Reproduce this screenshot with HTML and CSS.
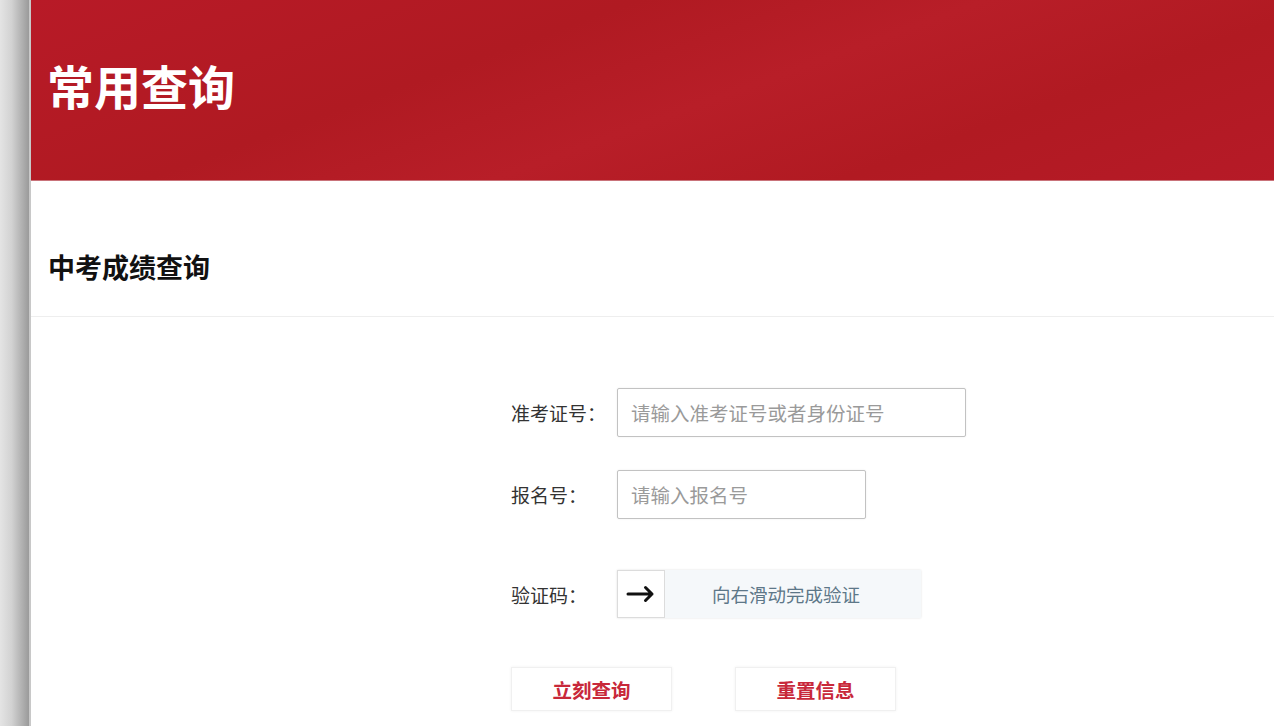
FILE: index.html
```html
<!DOCTYPE html>
<html lang="zh-CN">
<head>
    <meta charset="UTF-8">
    <meta name="viewport" content="width=device-width, initial-scale=1.0">
    <title>常用查询</title>
    <link rel="stylesheet" href="styles.css">
</head>
<body>
    <div class="page">
        <div class="edge"></div>
        <main class="main">
            <header class="banner">
                <h1>常用查询</h1>
            </header>
            <section class="panel">
                <h2>中考成绩查询</h2>
            </section>
            <form class="query-form" id="query-form">
                <div class="row">
                    <label for="zkzh">准考证号：</label>
                    <input type="text" id="zkzh" class="wide" placeholder="请输入准考证号或者身份证号">
                </div>
                <div class="row">
                    <label for="bmh">报名号：</label>
                    <input type="text" id="bmh" placeholder="请输入报名号">
                </div>
                <div class="row row-captcha">
                    <label>验证码：</label>
                    <div class="slider">
                        <div class="slider-handle">
                            <svg width="30" height="20" viewBox="0 0 30 20">
                                <path d="M2 10 H26 M19.5 3.5 L26 10 L19.5 16.5" fill="none" stroke="#111" stroke-width="3" stroke-linecap="round" stroke-linejoin="round"/>
                            </svg>
                        </div>
                        <div class="slider-text">向右滑动完成验证</div>
                    </div>
                </div>
                <div class="actions">
                    <button type="submit">立刻查询</button>
                    <button type="reset">重置信息</button>
                </div>
            </form>
        </main>
    </div>
</body>
</html>
```

FILE: styles.css
```css
body {
    margin: 0;
    font-family: "Noto Sans CJK SC", "Noto Sans", sans-serif;
    background: #fff;
    overflow: hidden;
}

.page {
    display: flex;
    height: 726px;
}

.edge {
    width: 29px;
    flex-shrink: 0;
    background: linear-gradient(to right, #e4e4e4 0%, #d2d2d2 40%, #9a9a9a 100%);
    border-right: 2px solid #c8c8c8;
}

.main {
    flex: 1;
    background: #fff;
}

.banner {
    height: 181px;
    display: flex;
    align-items: center;
    padding: 0 16px 12px;
    box-sizing: border-box;
    background: linear-gradient(160deg, #b81a27 0%, #b01a22 35%, #b81e28 55%, #b11a22 75%, #b61a27 100%);
    border-bottom: 1px solid #c9737a;
}

.banner h1 {
    margin: 0;
    color: #fff;
    font-size: 47px;
    font-weight: 700;
}

.panel {
    padding: 69px 17px 32px;
    border-bottom: 1px solid #eeeeee;
}

.panel h2 {
    margin: 0;
    font-size: 27px;
    line-height: 34px;
    font-weight: 700;
    color: #111;
}

.query-form {
    padding: 71px 0 0 480px;
}

.row {
    display: flex;
    align-items: center;
    margin-bottom: 33px;
}

.row label {
    width: 106px;
    font-size: 19px;
    color: #333;
}

.row input {
    width: 249px;
    height: 49px;
    box-sizing: border-box;
    border: 1px solid #c2c2c2;
    border-radius: 2px;
    box-shadow: 0 0 2px rgba(0, 0, 0, 0.08);
    padding: 0 13px;
    font-size: 19.5px;
    font-family: inherit;
    color: #333;
}

.row input.wide {
    width: 349px;
}

.row input::placeholder {
    color: #9a9a9a;
}

.row-captcha {
    margin-top: 51px;
    margin-bottom: 49px;
}

.slider {
    display: flex;
    width: 304px;
    height: 48px;
    background: #f5f8fa;
    box-shadow: 0 0 2px rgba(0, 0, 0, 0.12);
}

.slider-handle {
    width: 48px;
    height: 48px;
    box-sizing: border-box;
    background: #fff;
    border: 1px solid #dcdcdc;
    display: flex;
    align-items: center;
    justify-content: center;
}

.slider-text {
    flex: 1;
    display: flex;
    align-items: center;
    justify-content: center;
    padding-right: 14px;
    font-size: 18.5px;
    color: #5d7788;
}

.actions {
    display: flex;
    gap: 63px;
}

.actions button {
    width: 161px;
    height: 44px;
    background: #fff;
    border: 1px solid #f0f0f0;
    box-shadow: 0 0 3px rgba(0, 0, 0, 0.06);
    font-family: inherit;
    font-size: 19.5px;
    font-weight: 700;
    color: #c8283a;
    cursor: pointer;
}
```
